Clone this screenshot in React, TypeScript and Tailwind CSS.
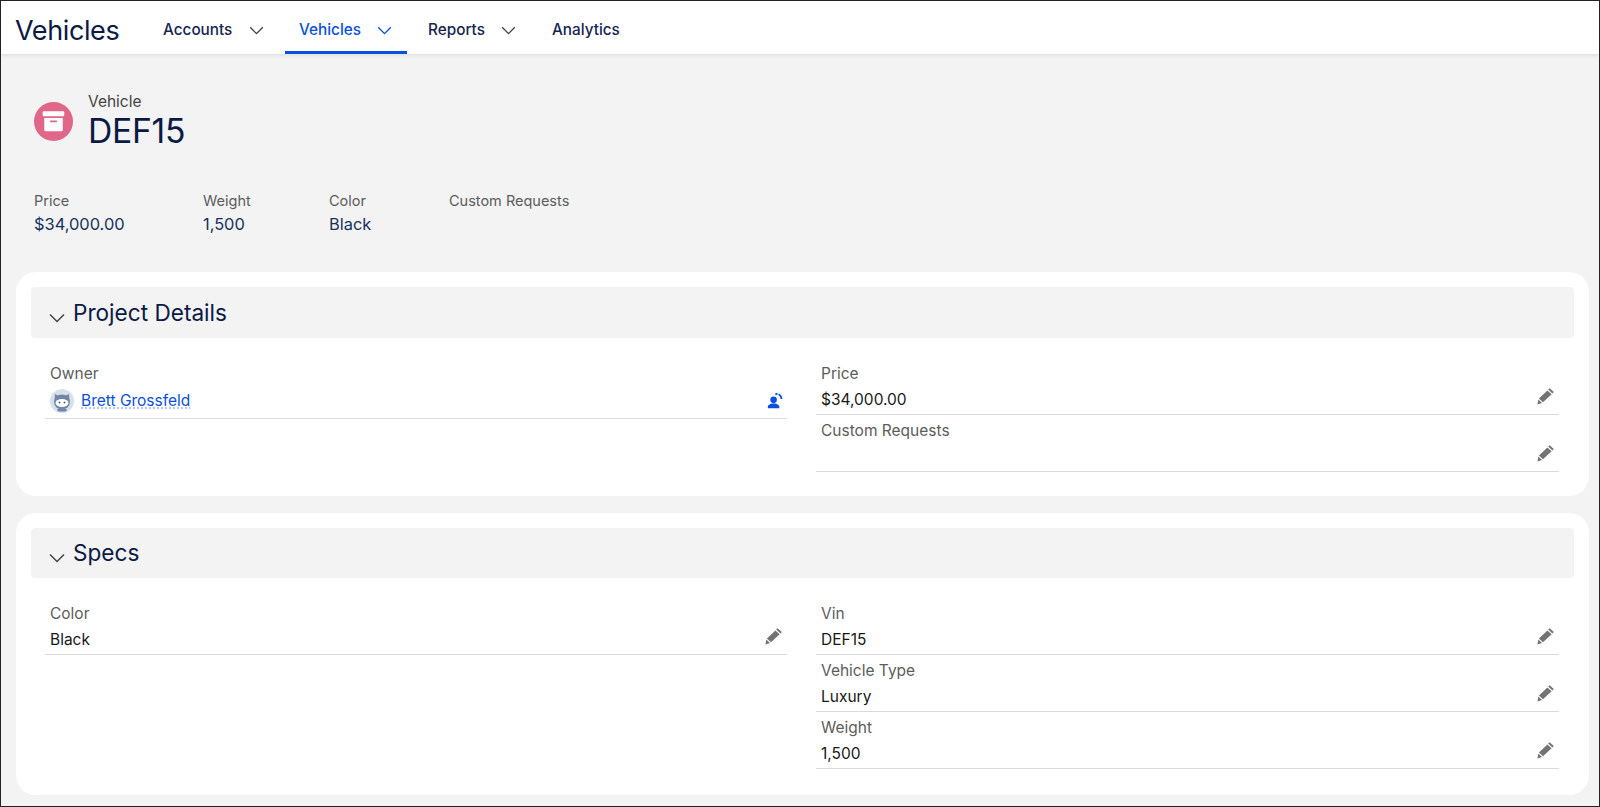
import React from "react";

const Chevron = ({ className }: { className: string }) => (
  <svg viewBox="0 0 16 10" fill="none" stroke="currentColor" strokeWidth="1.5" className={className}>
    <path d="M1 1.5 L8 8.5 L15 1.5" />
  </svg>
);

const Pencil = () => (
  <svg viewBox="0 0 18 18" className="-mt-[8px] h-[18px] w-[18px] text-[#737373]" fill="currentColor">
    <path d="M12.6 1.2 L16.8 5.1 L15.4 6.5 L11.2 2.6 Z" />
    <path d="M10.4 3.4 L14.6 7.3 L6 15.2 L1.9 11.4 Z" />
    <path d="M1.3 12.4 L5 15.9 L0.5 17.4 Z" />
  </svg>
);

const Assign = () => (
  <svg viewBox="0 0 16 16" className="h-[17px] w-[17px] text-[#0b50e0]" fill="currentColor">
    <circle cx="6.2" cy="7.4" r="3.1" />
    <path d="M0.8 15.4 V13.6 C0.8 12.2 3 11.4 4.4 10.8 L8 10.8 C9.4 11.4 11.6 12.2 11.6 13.6 V15.4 Z" />
    <path d="M7.6 1.4 L9.8 0.8 L10.2 2.4 L8 3 Z" />
    <path d="M11.3 1.4 C13.2 2.4 14.4 4.3 14.5 6.5 L12.8 6.6 C12.7 5 11.8 3.6 10.5 2.9 Z" />
  </svg>
);

const Avatar = () => (
  <svg viewBox="0 0 24 24" className="h-[24px] w-[24px]">
    <circle cx="12" cy="12" r="12" fill="#d8e0ea" />
    <path d="M5 5 L8 6.5 L16 6.5 L19 5 L19.5 12 L4.5 12 Z" fill="#7186a8" />
    <ellipse cx="12" cy="13" rx="8" ry="7.5" fill="#7186a8" />
    <ellipse cx="12" cy="14" rx="6.5" ry="4" fill="#ffffff" />
    <circle cx="9.5" cy="13.5" r="1" fill="#4f6285" />
    <circle cx="14.5" cy="13.5" r="1" fill="#4f6285" />
    <path d="M7 20 L17 20 L16 22.5 L8 22.5 Z" fill="#7186a8" />
  </svg>
);

const BoxIcon = () => (
  <svg viewBox="0 0 38 38" className="h-[39px] w-[39px] shrink-0">
    <circle cx="19" cy="19" r="19" fill="#e0668a" />
    <rect x="8.5" y="9" width="21" height="5" rx="1" fill="#ffffff" />
    <path d="M10 15.5 H28 V27 a1.5 1.5 0 0 1 -1.5 1.5 H11.5 a1.5 1.5 0 0 1 -1.5 -1.5 Z" fill="#ffffff" />
    <rect x="15.5" y="18" width="7" height="1.8" rx="0.9" fill="#e0668a" />
  </svg>
);

const Field = ({ label, value }: { label: string; value?: string }) => (
  <div className="h-[57px] border-b border-[#dddbda] pl-[5px] pr-[4px] pt-[5px]">
    <div className="h-[21px] text-[15.5px] leading-[21px] text-[#5c5c5c]">{label}</div>
    <div className="flex h-[25px] items-center justify-between pt-[6px]">
      <span className="text-[15.5px] text-[#181818]">{value}</span>
      <Pencil />
    </div>
  </div>
);

const Section = ({ title, heightClass }: { title: string; heightClass: string }) => (
  <div className={`flex items-center gap-[8px] rounded-[4px] bg-[#f3f3f3] pl-[18px] ${heightClass}`}>
    <Chevron className="mt-[10px] h-[10px] w-[16px] text-[#444444]" />
    <h2 className="text-[22.6px] leading-[28px] text-[#0b1a44]">{title}</h2>
  </div>
);

const Stat = ({ label, value, className }: { label: string; value?: string; className: string }) => (
  <div className={className}>
    <div className="h-[22px] text-[14.5px] leading-[21px] text-[#5c5c5c]">{label}</div>
    <div className="text-[16.4px] leading-[24px] text-[#16325c]">{value}</div>
  </div>
);

export default function App() {
  return (
    <div
      className="h-[807px] w-[1600px] overflow-hidden border border-[#222222] bg-[#f3f3f3]"
      style={{ fontFamily: "Inter, 'Noto Sans', sans-serif" }}
    >
      <header className="flex h-[53px] items-stretch bg-white pl-[14px] shadow-[0_1px_4px_rgba(0,0,0,0.1)]">
        <div className="flex w-[132px] items-center pt-[8px] text-[27px] tracking-[-0.4px] text-[#0b1a44]">Vehicles</div>
        <nav className="flex items-stretch text-[15.3px] font-medium text-[#16254f]">
          <div className="flex w-[138px] items-center gap-[17px] pl-[16px] pt-[6px]">
            <span>Accounts</span>
            <Chevron className="h-[9px] w-[15px] text-[#444444]" />
          </div>
          <div className="flex w-[122px] items-center gap-[16px] border-b-[3px] border-[#0b50e0] pl-[14px] pt-[9px] text-[#0b50e0]">
            <span>Vehicles</span>
            <Chevron className="h-[9px] w-[15px]" />
          </div>
          <div className="flex w-[145px] items-center gap-[16px] pl-[21px] pt-[6px]">
            <span>Reports</span>
            <Chevron className="h-[9px] w-[15px] text-[#444444]" />
          </div>
          <div className="flex items-center pt-[6px]">Analytics</div>
        </nav>
      </header>

      <section className="pl-[33px] pt-[47px]">
        <div className="flex gap-[15px]">
          <div className="pt-[1px]"><BoxIcon /></div>
          <div className="-mt-[9px]">
            <div className="text-[15.5px] leading-[20px] text-[#444444]">Vehicle</div>
            <div className="text-[33.7px] leading-[38px] tracking-[-0.3px] text-[#0b1a44]">DEF15</div>
          </div>
        </div>
        <div className="mt-[40px] flex">
          <Stat label="Price" value="$34,000.00" className="w-[169px]" />
          <Stat label="Weight" value="1,500" className="w-[126px]" />
          <Stat label="Color" value="Black" className="w-[120px]" />
          <Stat label="Custom Requests" className="w-[200px]" />
        </div>
      </section>

      <section className="ml-[15px] mr-[10px] mt-[36px] h-[224px] rounded-[20px] bg-white px-[15px] pt-[15px]">
        <Section title="Project Details" heightClass="h-[51px]" />
        <div className="mt-[20px] grid grid-cols-[742px_743px] gap-x-[29px] pl-[14px]">
          <div className="h-[61px] border-b border-[#dddbda] pl-[5px] pr-[1px] pt-[5px]">
            <div className="h-[21px] text-[15.5px] leading-[21px] text-[#5c5c5c]">Owner</div>
            <div className="flex h-[27px] items-center justify-between pt-[6px]">
              <div className="flex items-center gap-[7px]">
                <Avatar />
                <a href="#" className="text-[15.5px] text-[#0b50e0] underline decoration-[#9db4f0] decoration-dotted underline-offset-2">Brett Grossfeld</a>
              </div>
              <div className="pr-[2px]"><Assign /></div>
            </div>
          </div>
          <div>
            <Field label="Price" value="$34,000.00" />
            <Field label="Custom Requests" />
          </div>
        </div>
      </section>

      <section className="ml-[15px] mr-[10px] mt-[17px] h-[282px] rounded-[20px] bg-white px-[15px] pt-[15px]">
        <Section title="Specs" heightClass="h-[50px]" />
        <div className="mt-[20px] grid grid-cols-[742px_743px] gap-x-[29px] pl-[14px]">
          <div>
            <Field label="Color" value="Black" />
          </div>
          <div>
            <Field label="Vin" value="DEF15" />
            <Field label="Vehicle Type" value="Luxury" />
            <Field label="Weight" value="1,500" />
          </div>
        </div>
      </section>
    </div>
  );
}
